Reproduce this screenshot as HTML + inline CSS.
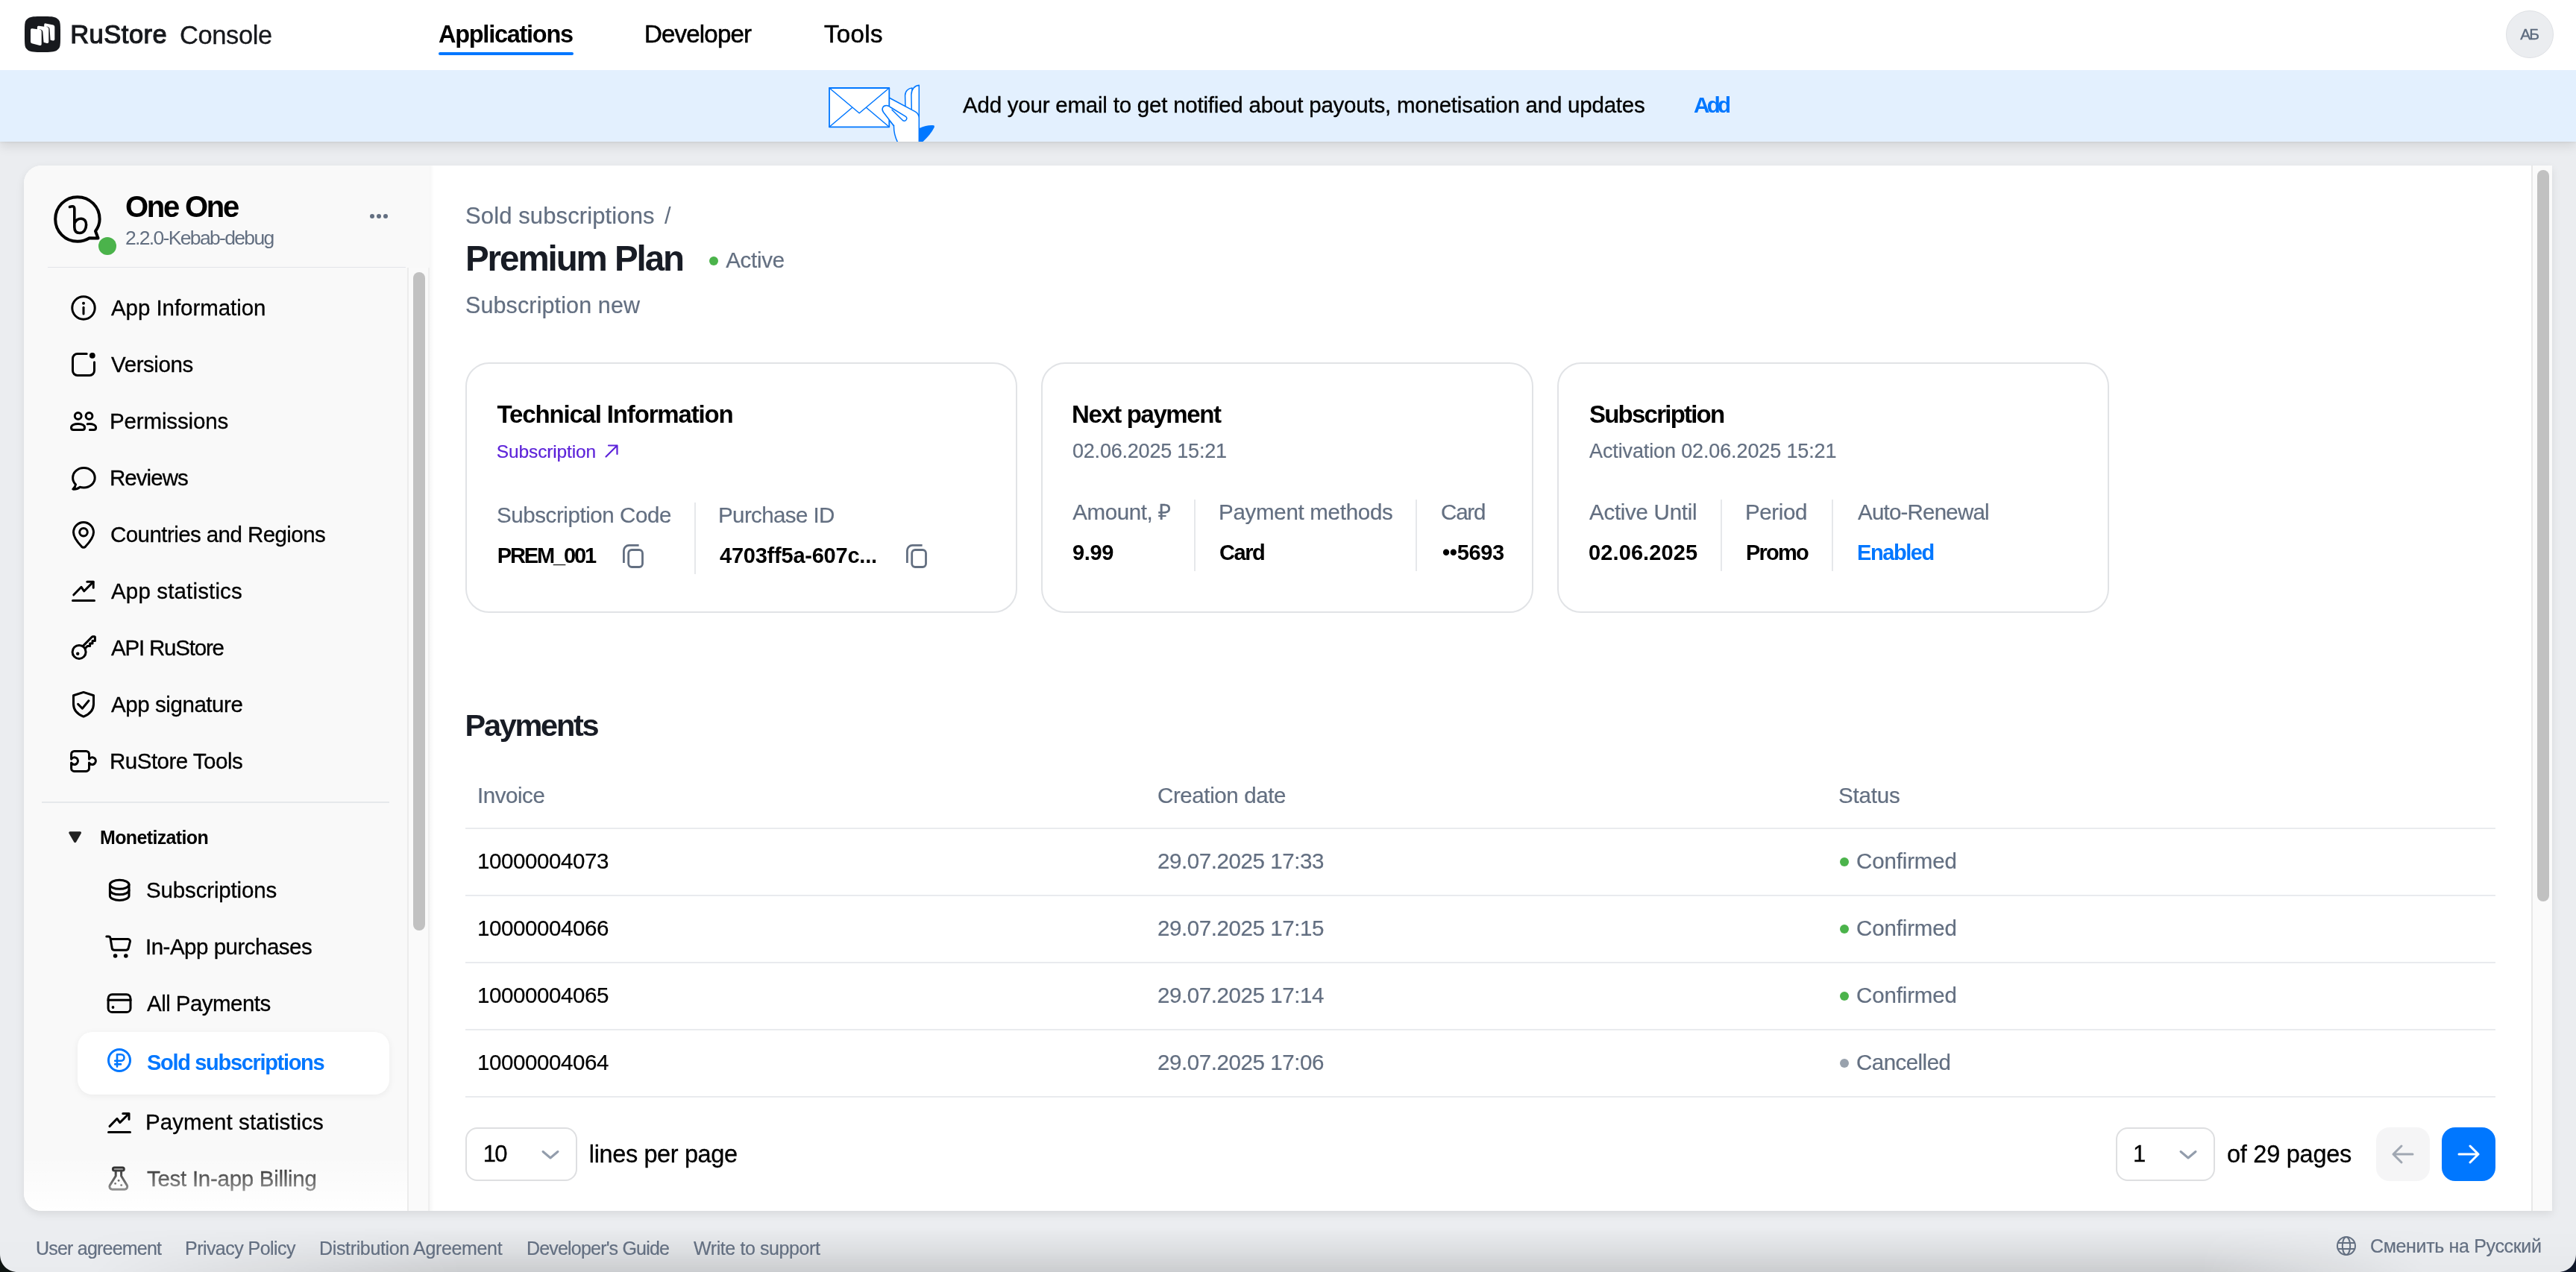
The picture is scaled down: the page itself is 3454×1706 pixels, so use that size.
<!DOCTYPE html>
<html lang="en"><head><meta charset="utf-8"><title>RuStore Console</title><style>
*{box-sizing:border-box;margin:0;padding:0}
html,body{width:3454px;height:1706px;overflow:hidden;background:#EBEDF0;font-family:"Liberation Sans",sans-serif;color:#000}
#app{position:absolute;left:0;top:0;width:3454px;height:1706px;overflow:hidden;will-change:transform;background:#EBEDF0}
.t{position:absolute;white-space:nowrap;line-height:1;display:block}
.i{position:absolute;display:block;overflow:visible}
.abs{position:absolute}
header{position:absolute;left:0;top:0;width:3454px;height:94px;background:#fff;z-index:5}
.banner{position:absolute;left:0;top:94px;width:3454px;height:96px;background:#E3F0FE;z-index:4;box-shadow:0 6px 14px rgba(0,0,0,.10),0 1px 3px rgba(0,0,0,.06);overflow:hidden}
.panel{position:absolute;left:32px;top:222px;width:3390px;height:1402px;border-radius:24px 0 0 24px;background:#fff;box-shadow:0 4px 12px rgba(0,0,0,.085);overflow:hidden}
aside{position:absolute;left:0;top:0;width:544px;height:1402px;background:#F9F9F9}
main{position:absolute;left:544px;top:0;width:2819px;height:1402px;background:#fff}
.card{position:absolute;border:2px solid #E1E3E6;border-radius:32px;background:#fff}
.vl{position:absolute;width:2px;background:#E6E8EB}
.hl{position:absolute;height:2px;background:#E9EBEE}
.dot{position:absolute;border-radius:50%}
footer{position:absolute;left:0;top:1624px;width:3454px;height:82px}
</style></head><body>
<div id="app">

<header>
<svg class="i" style="left:33px;top:22px" width="48" height="48" viewBox="0 0 48 48"><path d="M24 0c10.500 0 15.800 0 19.500 2.700 1.200.900 2.300 2 3.100 3.200C48 9 48 13.500 48 24s0 15-1.400 18.100c-.800 1.200-1.900 2.300-3.100 3.200C39.800 48 34.500 48 24 48S8.200 48 4.500 45.300c-1.200-.900-2.300-2-3.100-3.200C0 39 0 34.500 0 24S0 9 1.400 5.900c.800-1.200 1.900-2.300 3.100-3.200C8.200 0 13.500 0 24 0z" fill="#17191D"/>
<path d="M26.200 11.300q0-2.300 2.200-1.900l10 2.100q1.900.5 1.900 2.500v16.400q0 2.500-2.400 2l-11.700-2.700z" fill="#fff"/>
<path d="M29.6 13.4c2.7.3 3.9 1.6 4 3.6l1 15.2-3 4.500-3-16z" fill="#17191D"/>
<path d="M16.900 14.700q0-2.300 2.200-1.900l11.300 1.500q1.900.4 1.900 2.400v17.300q0 2.500-2.400 2l-13-3.600z" fill="#fff"/>
<path d="M20.2 17.2c2.900.3 4.100 1.600 4.200 3.600l1.200 14.700-3 5-4-18z" fill="#17191D"/>
<path d="M8 18.300q0-2.300 2.200-2l10.600 1.400q1.900.4 1.900 2.400v17q0 2.500-2.400 1.900l-10.400-2.700q-1.900-.5-1.900-2.500z" fill="#fff"/></svg>
<span class="t" style="left:94.20px;top:29.00px;font-size:34.5px;color:#17191D;letter-spacing:0.504px;-webkit-text-stroke:1.2px;">RuStore</span>
<span class="t" style="left:241.00px;top:30.00px;font-size:34.5px;color:#17191D;letter-spacing:-0.399px;-webkit-text-stroke:0.3px;">Console</span>
<span class="t" style="left:588.00px;top:30.00px;font-size:32.5px;font-weight:700;letter-spacing:-1.267px;">Applications</span>
<div class="abs" style="left:588px;top:70px;width:181px;height:4px;border-radius:2px;background:#0077FF"></div>
<span class="t" style="left:864.00px;top:29.00px;font-size:33px;letter-spacing:-0.804px;-webkit-text-stroke:0.55px;">Developer</span>
<span class="t" style="left:1105.00px;top:29.00px;font-size:33px;letter-spacing:0.366px;-webkit-text-stroke:0.55px;">Tools</span>
<div class="abs" style="left:3360px;top:14px;width:64px;height:64px;border-radius:50%;background:#EBEDF0;border:1px solid #DFE1E5"></div>
<span class="t" style="left:3379.30px;top:35.00px;font-size:21px;color:#5D6B7E;letter-spacing:-2.007px;-webkit-text-stroke:0.3px;">АБ</span>
</header>

<div class="banner">
<svg class="i" style="left:1108px;top:0" width="160" height="96" viewBox="1108 94 160 96" fill="none" stroke="#0077FF" stroke-width="1.500" stroke-linejoin="round" stroke-linecap="round">
<path d="M1214 144L1213.600 128C1213.600 122 1218 118.500 1223 118L1223 149Z" fill="#fff"/>
<path d="M1222.300 148L1221.900 127C1222 120 1226 115 1232.300 114.300L1232.300 158Z" fill="#fff"/>
<path d="M1185 127L1193 131.500L1227 149.700C1230.500 151.800 1232.300 154.500 1232.300 158.500L1232.300 192L1204.200 192C1200 184 1198.300 178 1198.500 168.500L1185 152Z" fill="#fff"/>
<rect x="1112" y="118" width="80.300" height="52.300" fill="#fff" stroke-width="1.800"/>
<path d="M1112 118L1152.200 151.700L1192.300 118M1112 170.300L1142.700 144.200M1192.300 170.300L1161.500 144.200"/>
<path d="M1198.500 168.800L1184.500 150.500C1181.500 146.500 1183.500 141.500 1188.500 141.500C1190.500 141.500 1192 142.300 1193.500 143.500L1214.500 156.300C1217.800 158.500 1214.300 163.800 1210.500 161.500L1196 147.200" fill="#fff"/>
<path d="M1232.600 172C1240 168.600 1247 167.300 1252.300 168.300C1253 169 1253 170 1252.600 171C1249 178 1244 184 1237 190.500L1232.600 190.500Z" fill="#0077FF" stroke="none"/>
</svg>
<span class="t" style="left:1291.00px;top:32.00px;font-size:29.5px;letter-spacing:-0.219px;-webkit-text-stroke:0.35px;">Add your email to get notified about payouts, monetisation and updates</span>
<span class="t" style="left:2271.00px;top:32.00px;font-size:29.5px;font-weight:700;color:#0077FF;letter-spacing:-3.662px;">Add</span>
</div>

<div class="panel"><aside><svg class="i" style="left:38px;top:38px" width="70" height="70" viewBox="70 260 70 70" fill="none" stroke="#000" stroke-width="4" stroke-linecap="round" stroke-linejoin="round">
<path d="M131.500 319.500l-3.500-9.500c3.500-4.800 5.600-10.300 5.600-16 0-16.500-13-29.800-29.700-29.800S74.200 277.500 74.200 294s13.200 29.800 29.700 29.800c5.900 0 11.400-1.600 16-4.500z"/>
<path d="M93.500 277.500c4-1.500 6.300-1 6.300 3v24c0 5 2.500 8 7 8 5.500 0 8.800-5 8.800-11 0-5-2.600-8.300-7-8.300-4 0-7 2.500-8.800 6.300" stroke-width="3.600"/></svg>
<div class="dot" style="left:100px;top:96px;width:24px;height:24px;background:#4BB34B"></div>
<span class="t" style="left:136.00px;top:35.00px;font-size:40px;font-weight:700;letter-spacing:-2.242px;">One One</span>
<span class="t" style="left:136.00px;top:84.00px;font-size:26.5px;color:#636F81;letter-spacing:-1.667px;">2.2.0-Kebab-debug</span>
<div class="dot" style="left:464px;top:64.5px;width:6px;height:6px;background:#636F81"></div>
<div class="dot" style="left:473px;top:64.5px;width:6px;height:6px;background:#636F81"></div>
<div class="dot" style="left:482px;top:64.5px;width:6px;height:6px;background:#636F81"></div>
<div class="abs" style="left:32px;top:135.5px;width:480px;height:1.500px;background:#E3E5E9"></div>
<svg class="i" style="left:60px;top:171px;color:#000" width="40" height="40" viewBox="0 0 20 20" fill="none" stroke="currentColor" stroke-width="1.5" stroke-linecap="round" stroke-linejoin="round" ><circle cx="10" cy="10" r="7.600"/><circle cx="10" cy="6.900" r="1" fill="currentColor" stroke="none"/><path d="M10 9.600v4.400"/></svg><span class="t" style="left:117.00px;top:176.00px;font-size:29.5px;letter-spacing:-0.061px;-webkit-text-stroke:0.3px;">App Information</span><svg class="i" style="left:60px;top:246.5px;color:#000" width="40" height="40" viewBox="0 0 20 20" fill="none" stroke="currentColor" stroke-width="1.5" stroke-linecap="round" stroke-linejoin="round" ><path d="M12.100 2.750H5.950a3.200 3.200 0 0 0-3.200 3.200v8.100a3.200 3.200 0 0 0 3.200 3.200h8.100a3.200 3.200 0 0 0 3.200-3.200V8.400"/><circle cx="15.900" cy="3.900" r="1.950" fill="currentColor" stroke="none"/></svg><span class="t" style="left:117.00px;top:252.00px;font-size:29.5px;letter-spacing:-0.414px;-webkit-text-stroke:0.3px;">Versions</span><svg class="i" style="left:60px;top:322.5px;color:#000" width="40" height="40" viewBox="0 0 20 20" fill="none" stroke="currentColor" stroke-width="1.5" stroke-linecap="round" stroke-linejoin="round" ><circle cx="6.350" cy="6.450" r="2.200"/><circle cx="13.750" cy="6.450" r="2.200"/><path d="M1.750 14.300c0-1.600 2-2.500 4.600-2.500s4.400.900 4.400 2.500c0 1-.600 1.500-1.500 1.500H3.250c-.900 0-1.500-.500-1.500-1.500z"/><path d="M12.600 11.900c.400-.100.900-.100 1.300-.100 2.400 0 4.400.900 4.400 2.500 0 1-.600 1.500-1.500 1.500h-2.600"/></svg><span class="t" style="left:115.00px;top:328.00px;font-size:29.5px;letter-spacing:-0.140px;-webkit-text-stroke:0.3px;">Permissions</span><svg class="i" style="left:60px;top:398.5px;color:#000" width="40" height="40" viewBox="0 0 20 20" fill="none" stroke="currentColor" stroke-width="1.5" stroke-linecap="round" stroke-linejoin="round" ><path d="M10.200 3.200C6.100 3.200 2.800 6.150 2.800 9.850c0 1.750.750 3.300 1.950 4.500-.150 1.150-.750 2.200-1.850 3.200 1.900.100 3.500-.400 4.600-1.400.850.250 1.750.350 2.700.350 4.100 0 7.400-2.950 7.400-6.650S14.300 3.200 10.200 3.200z"/></svg><span class="t" style="left:115.00px;top:404.00px;font-size:29.5px;letter-spacing:-0.954px;-webkit-text-stroke:0.3px;">Reviews</span><svg class="i" style="left:60px;top:475px;color:#000" width="40" height="40" viewBox="0 0 20 20" fill="none" stroke="currentColor" stroke-width="1.5" stroke-linecap="round" stroke-linejoin="round" ><path d="M10 18.650c-.500 0-.900-.200-1.300-.600C5.500 14.600 3.250 11.500 3.250 8.500a6.750 6.750 0 0 1 13.500 0c0 3-2.250 6.100-5.450 9.550-.400.400-.800.600-1.300.600z"/><circle cx="10" cy="8.400" r="2.650"/></svg><span class="t" style="left:116.00px;top:480.00px;font-size:29.5px;letter-spacing:-0.567px;-webkit-text-stroke:0.3px;">Countries and Regions</span><svg class="i" style="left:60px;top:550.5px;color:#000" width="40" height="40" viewBox="0 0 20 20" fill="none" stroke="currentColor" stroke-width="1.5" stroke-linecap="round" stroke-linejoin="round" ><path d="M2.750 16.250h14.500"/><path d="M3.400 12.400L8.500 7.150l1.900 2.750 6.100-6.200"/><path d="M12.400 3.600h4.200v4"/></svg><span class="t" style="left:117.00px;top:556.00px;font-size:29.5px;letter-spacing:0.151px;-webkit-text-stroke:0.3px;">App statistics</span><svg class="i" style="left:60px;top:627px;color:#000" width="40" height="40" viewBox="0 0 20 20" fill="none" stroke="currentColor" stroke-width="1.5" stroke-linecap="round" stroke-linejoin="round" ><circle cx="7.050" cy="12.700" r="4.500"/><circle cx="6.100" cy="13.900" r="1.100" fill="currentColor" stroke="none"/><path d="M9.700 8.700l5.700-5.850c.300-.300.650-.450 1.050-.450h.750c.300 0 .500.200.500.500V5.200h-1.700V7h-1.700v1.800h-1.700L11.200 10.300"/></svg><span class="t" style="left:117.00px;top:632.00px;font-size:29.5px;letter-spacing:-1.206px;-webkit-text-stroke:0.3px;">API RuStore</span><svg class="i" style="left:60px;top:702.5px;color:#000" width="40" height="40" viewBox="0 0 20 20" fill="none" stroke="currentColor" stroke-width="1.5" stroke-linecap="round" stroke-linejoin="round" ><path d="M10 1.700l6.750 2.200v5.700c0 4.200-2.900 6.900-6.750 8.450-3.850-1.550-6.750-4.250-6.750-8.450V3.900z"/><path d="M6.300 9.700l2.900 2.900 4.300-5.200"/></svg><span class="t" style="left:117.00px;top:708.00px;font-size:29.5px;letter-spacing:-0.428px;-webkit-text-stroke:0.3px;">App signature</span><svg class="i" style="left:60px;top:778.5px;color:#000" width="40" height="40" viewBox="0 0 20 20" fill="none" stroke="currentColor" stroke-width="1.5" stroke-linecap="round" stroke-linejoin="round" ><path d="M1.800 8.550V5.250a2 2 0 0 1 2-2h7.950a2 2 0 0 1 2 2V8.550A2.400 2.400 0 1 1 13.750 11.050V14.700a2 2 0 0 1-2 2H3.800a2 2 0 0 1-2-2V11.050A2.400 2.400 0 1 0 1.800 8.550z"/></svg><span class="t" style="left:115.00px;top:784.00px;font-size:29.5px;letter-spacing:-0.503px;-webkit-text-stroke:0.3px;">RuStore Tools</span><div class="abs" style="left:24px;top:853px;width:466px;height:2px;background:#E6E8EB"></div><svg class="i" style="left:59.8px;top:893.3px" width="17.300" height="15.400" viewBox="0 0 17.300 15.400"><path d="M1.900 .300h13.500c1.300 0 2 1.300 1.400 2.400L10 14.400c-.650 1.100-2.050 1.100-2.700 0L.500 2.700C-.100 1.600.600 .300 1.900 .300z" fill="#222"/></svg><span class="t" style="left:102.00px;top:889.00px;font-size:25px;font-weight:700;letter-spacing:-0.635px;">Monetization</span><div class="abs" style="left:72px;top:1162px;width:418px;height:84px;border-radius:20px;background:#fff;box-shadow:0 2px 10px rgba(0,0,0,.06)"></div><svg class="i" style="left:112px;top:955px;color:#000" width="32" height="32" viewBox="0 0 16 16" fill="none" stroke="currentColor" stroke-width="1.5" stroke-linecap="round" stroke-linejoin="round" ><ellipse cx="8.100" cy="4.650" rx="6.400" ry="3"/><path d="M1.700 4.650v7.550c0 1.650 2.870 3 6.400 3s6.400-1.350 6.400-3V4.650"/><path d="M1.700 8.400c0 1.650 2.870 3 6.400 3s6.400-1.350 6.400-3"/></svg><span class="t" style="left:164.00px;top:957.00px;font-size:29.5px;letter-spacing:-0.153px;-webkit-text-stroke:0.3px;">Subscriptions</span><svg class="i" style="left:112px;top:1031px;color:#000" width="32" height="32" viewBox="0 0 16 16" fill="none" stroke="currentColor" stroke-width="1.5" stroke-linecap="round" stroke-linejoin="round" ><path d="M-.600 1.500H.700c.700 0 1.200.500 1.300 1.100l1.100 6.700c.150.800.800 1.300 1.600 1.300h7.800c.800 0 1.400-.500 1.600-1.300l1.100-4.300c.200-.900-.500-1.700-1.400-1.700H2.300"/><circle cx="5.300" cy="14.500" r="1.400" fill="currentColor" stroke="none"/><circle cx="12.400" cy="14.500" r="1.400" fill="currentColor" stroke="none"/></svg><span class="t" style="left:163.00px;top:1033.00px;font-size:29.5px;letter-spacing:-0.498px;-webkit-text-stroke:0.3px;">In-App purchases</span><svg class="i" style="left:112px;top:1107px;color:#000" width="32" height="32" viewBox="0 0 16 16" fill="none" stroke="currentColor" stroke-width="1.5" stroke-linecap="round" stroke-linejoin="round" ><rect x=".550" y="2.400" width="14.950" height="11.900" rx="2.700"/><path d="M.550 6.150h14.950"/><circle cx="3.750" cy="11" r=".950" fill="currentColor" stroke="none"/></svg><span class="t" style="left:165.00px;top:1109.00px;font-size:29.5px;letter-spacing:-0.536px;-webkit-text-stroke:0.3px;">All Payments</span><svg class="i" style="left:112px;top:1184px;color:#0077FF" width="32" height="32" viewBox="0 0 16 16" fill="none" stroke="currentColor" stroke-width="1.5" stroke-linecap="round" stroke-linejoin="round" ><circle cx="8" cy="8" r="7.250"/><path d="M6.500 12.300V4.100h2.600a2.150 2.150 0 0 1 0 4.300H5.100M5.100 10.700h3.900" stroke-width="1.300"/></svg><span class="t" style="left:165.00px;top:1189.00px;font-size:29px;font-weight:700;color:#0077FF;letter-spacing:-1.318px;">Sold subscriptions</span><svg class="i" style="left:112px;top:1267px;color:#000" width="32" height="32" viewBox="0 0 16 16" fill="none" stroke="currentColor" stroke-width="1.5" stroke-linecap="round" stroke-linejoin="round" ><path d="M.750 14.750h14.500"/><path d="M1.500 10.800L6.500 5.650l1.900 2.650 5.900-5.900"/><path d="M10.400 2.250h4.100v3.850"/></svg><span class="t" style="left:163.00px;top:1268.00px;font-size:29.5px;letter-spacing:0.061px;-webkit-text-stroke:0.3px;">Payment statistics</span><svg class="i" style="left:112px;top:1343px;color:#000" width="32" height="32" viewBox="0 0 16 16" fill="none" stroke="currentColor" stroke-width="1.5" stroke-linecap="round" stroke-linejoin="round" ><rect x="3.700" y=".500" width="7.450" height="2.050" rx="1"/><path d="M5.600 2.600v3.500L1.700 12.300c-.800 1.250.100 2.800 1.500 2.800h8.400c1.400 0 2.300-1.550 1.500-2.800L9.300 6.100V2.600"/><circle cx="7.550" cy="9.200" r=".700" fill="currentColor" stroke="none"/><circle cx="5.300" cy="11.200" r=".700" fill="currentColor" stroke="none"/><circle cx="9.350" cy="12.300" r=".700" fill="currentColor" stroke="none"/></svg><span class="t" style="left:165.00px;top:1344.00px;font-size:29.5px;letter-spacing:-0.274px;-webkit-text-stroke:0.3px;">Test In-app Billing</span><div class="abs" style="left:0;top:1328px;width:515px;height:74px;background:linear-gradient(to bottom,rgba(252,252,252,0),rgba(255,255,255,.55) 60%,#fff)"></div><div class="abs" style="left:514px;top:137px;width:30px;height:1265px;background:#FAFAFA;border-left:2px solid #ECECEC;border-right:2px solid #EFEFEF"></div><div class="abs" style="left:522px;top:143px;width:16px;height:883px;border-radius:8px;background:#C1C1C1"></div></aside><main><div class="abs" style="left:0;top:0;width:6px;height:1402px;background:linear-gradient(to right,rgba(0,0,0,.035),rgba(0,0,0,0))"></div><span class="t" style="left:48.00px;top:52.00px;font-size:31px;color:#636F81;letter-spacing:0.113px;-webkit-text-stroke:0.2px;">Sold subscriptions</span><span class="t" style="left:315.00px;top:52.00px;font-size:31px;color:#636F81;">/</span><span class="t" style="left:48.00px;top:101.00px;font-size:47.5px;font-weight:700;color:#181C25;letter-spacing:-2.069px;">Premium Plan</span><div class="dot" style="left:375px;top:122px;width:12px;height:12px;background:#4BB34B"></div><span class="t" style="left:397.20px;top:112.00px;font-size:29.5px;color:#636F81;letter-spacing:-0.265px;-webkit-text-stroke:0.2px;">Active</span><span class="t" style="left:48.00px;top:172.00px;font-size:30.5px;color:#636F81;letter-spacing:0.117px;-webkit-text-stroke:0.2px;">Subscription new</span><div class="card" style="left:48px;top:264px;width:740px;height:336px"></div><div class="card" style="left:820px;top:264px;width:660px;height:336px"></div><div class="card" style="left:1512px;top:264px;width:740px;height:336px"></div><span class="t" style="left:90.50px;top:317.00px;font-size:33px;font-weight:700;letter-spacing:-1.163px;">Technical Information</span><span class="t" style="left:89.80px;top:372.00px;font-size:24.5px;color:#5C22D9;letter-spacing:-0.127px;-webkit-text-stroke:0.2px;">Subscription</span><svg class="i" style="left:233px;top:372px" width="22" height="22" viewBox="0 0 22 22" fill="none" stroke="#5C22D9" stroke-width="2.200" stroke-linecap="round" stroke-linejoin="round"><path d="M3.500 18.500L18.500 3.500M7 3.500h11.500V15"/></svg><span class="t" style="left:90.00px;top:454.00px;font-size:29.5px;color:#636F81;letter-spacing:-0.416px;-webkit-text-stroke:0.2px;">Subscription Code</span><span class="t" style="left:387.00px;top:454.00px;font-size:29.5px;color:#636F81;letter-spacing:-0.602px;-webkit-text-stroke:0.2px;">Purchase ID</span><div class="vl" style="left:355px;top:452px;height:96px"></div><span class="t" style="left:90.80px;top:509.00px;font-size:29px;font-weight:700;letter-spacing:-2.139px;">PREM_001</span><span class="t" style="left:389.00px;top:509.00px;font-size:29px;font-weight:700;letter-spacing:-0.225px;">4703ff5a-607c...</span><svg class="i" style="left:254px;top:504px;color:#636F81" width="40" height="40" viewBox="0 0 20 20" fill="none" stroke="currentColor" stroke-width="1.4" stroke-linecap="round" stroke-linejoin="round" ><path d="M3.200 14.500V6.200a3.500 3.500 0 0 1 3.500-3.500h6.600" stroke-linecap="butt"/><rect x="6.350" y="5.750" width="9.400" height="11.500" rx="2.200"/></svg><svg class="i" style="left:634px;top:504px;color:#636F81" width="40" height="40" viewBox="0 0 20 20" fill="none" stroke="currentColor" stroke-width="1.4" stroke-linecap="round" stroke-linejoin="round" ><path d="M3.200 14.500V6.200a3.500 3.500 0 0 1 3.500-3.500h6.600" stroke-linecap="butt"/><rect x="6.350" y="5.750" width="9.400" height="11.500" rx="2.200"/></svg><span class="t" style="left:861.00px;top:317.00px;font-size:33px;font-weight:700;letter-spacing:-1.401px;">Next payment</span><span class="t" style="left:862.00px;top:370.00px;font-size:27px;color:#636F81;letter-spacing:-0.212px;-webkit-text-stroke:0.2px;">02.06.2025 15:21</span><span class="t" style="left:862.20px;top:450.00px;font-size:29.5px;color:#636F81;letter-spacing:-0.382px;-webkit-text-stroke:0.2px;">Amount, ₽</span><span class="t" style="left:1058.00px;top:450.00px;font-size:29.5px;color:#636F81;letter-spacing:-0.286px;-webkit-text-stroke:0.2px;">Payment methods</span><span class="t" style="left:1356.00px;top:450.00px;font-size:29.5px;color:#636F81;letter-spacing:-1.178px;-webkit-text-stroke:0.2px;">Card</span><div class="vl" style="left:1025px;top:448px;height:96px"></div><div class="vl" style="left:1322px;top:448px;height:96px"></div><span class="t" style="left:862.00px;top:505.00px;font-size:29px;font-weight:700;letter-spacing:-0.371px;">9.99</span><span class="t" style="left:1059.00px;top:505.00px;font-size:29px;font-weight:700;letter-spacing:-1.452px;">Card</span><span class="t" style="left:1358.00px;top:505.00px;font-size:29px;font-weight:700;letter-spacing:-0.338px;">••5693</span><span class="t" style="left:1555.00px;top:317.00px;font-size:33px;font-weight:700;letter-spacing:-1.774px;">Subscription</span><span class="t" style="left:1555.00px;top:370.00px;font-size:27px;color:#636F81;letter-spacing:-0.125px;-webkit-text-stroke:0.2px;">Activation 02.06.2025 15:21</span><span class="t" style="left:1555.00px;top:450.00px;font-size:29.5px;color:#636F81;letter-spacing:-0.272px;-webkit-text-stroke:0.2px;">Active Until</span><span class="t" style="left:1764.00px;top:450.00px;font-size:29.5px;color:#636F81;letter-spacing:-0.373px;-webkit-text-stroke:0.2px;">Period</span><span class="t" style="left:1915.00px;top:450.00px;font-size:29.5px;color:#636F81;letter-spacing:-0.795px;-webkit-text-stroke:0.2px;">Auto-Renewal</span><div class="vl" style="left:1731px;top:448px;height:96px"></div><div class="vl" style="left:1880px;top:448px;height:96px"></div><span class="t" style="left:1554.00px;top:505.00px;font-size:29px;font-weight:700;letter-spacing:0.110px;">02.06.2025</span><span class="t" style="left:1765.00px;top:505.00px;font-size:29px;font-weight:700;letter-spacing:-1.782px;">Promo</span><span class="t" style="left:1914.00px;top:505.00px;font-size:29px;font-weight:700;color:#0077FF;letter-spacing:-1.431px;">Enabled</span><span class="t" style="left:47.50px;top:730.00px;font-size:41.5px;font-weight:700;color:#181C25;letter-spacing:-2.284px;">Payments</span><span class="t" style="left:63.90px;top:830.00px;font-size:29.5px;color:#636F81;letter-spacing:-0.427px;-webkit-text-stroke:0.2px;">Invoice</span><span class="t" style="left:976.00px;top:830.00px;font-size:29.5px;color:#636F81;letter-spacing:-0.392px;-webkit-text-stroke:0.2px;">Creation date</span><span class="t" style="left:1889.00px;top:830.00px;font-size:29.5px;color:#636F81;letter-spacing:-0.176px;-webkit-text-stroke:0.2px;">Status</span><div class="hl" style="left:48px;top:888px;width:2722px"></div><div class="hl" style="left:48px;top:978px;width:2722px"></div><div class="hl" style="left:48px;top:1068px;width:2722px"></div><div class="hl" style="left:48px;top:1158px;width:2722px"></div><div class="hl" style="left:48px;top:1248px;width:2722px"></div><span class="t" style="left:63.90px;top:918.00px;font-size:29.5px;letter-spacing:-0.396px;-webkit-text-stroke:0.2px;">10000004073</span><span class="t" style="left:976.00px;top:918.00px;font-size:29.5px;color:#636F81;letter-spacing:-0.417px;-webkit-text-stroke:0.2px;">29.07.2025 17:33</span><span class="t" style="left:1913.00px;top:918.00px;font-size:29.5px;color:#636F81;letter-spacing:-0.146px;-webkit-text-stroke:0.2px;">Confirmed</span><div class="dot" style="left:1891px;top:928px;width:12px;height:12px;background:#4BB34B"></div><span class="t" style="left:63.90px;top:1008.00px;font-size:29.5px;letter-spacing:-0.396px;-webkit-text-stroke:0.2px;">10000004066</span><span class="t" style="left:976.00px;top:1008.00px;font-size:29.5px;color:#636F81;letter-spacing:-0.417px;-webkit-text-stroke:0.2px;">29.07.2025 17:15</span><span class="t" style="left:1913.00px;top:1008.00px;font-size:29.5px;color:#636F81;letter-spacing:-0.146px;-webkit-text-stroke:0.2px;">Confirmed</span><div class="dot" style="left:1891px;top:1018px;width:12px;height:12px;background:#4BB34B"></div><span class="t" style="left:63.90px;top:1098.00px;font-size:29.5px;letter-spacing:-0.396px;-webkit-text-stroke:0.2px;">10000004065</span><span class="t" style="left:976.00px;top:1098.00px;font-size:29.5px;color:#636F81;letter-spacing:-0.417px;-webkit-text-stroke:0.2px;">29.07.2025 17:14</span><span class="t" style="left:1913.00px;top:1098.00px;font-size:29.5px;color:#636F81;letter-spacing:-0.146px;-webkit-text-stroke:0.2px;">Confirmed</span><div class="dot" style="left:1891px;top:1108px;width:12px;height:12px;background:#4BB34B"></div><span class="t" style="left:63.90px;top:1188.00px;font-size:29.5px;letter-spacing:-0.396px;-webkit-text-stroke:0.2px;">10000004064</span><span class="t" style="left:976.00px;top:1188.00px;font-size:29.5px;color:#636F81;letter-spacing:-0.417px;-webkit-text-stroke:0.2px;">29.07.2025 17:06</span><span class="t" style="left:1913.00px;top:1188.00px;font-size:29.5px;color:#636F81;letter-spacing:-0.536px;-webkit-text-stroke:0.2px;">Cancelled</span><div class="dot" style="left:1891px;top:1198px;width:12px;height:12px;background:#99A2AD"></div><div class="abs" style="left:48.299999999999955px;top:1290px;width:149.400px;height:72px;border:2px solid #DEDFE1;border-radius:16px"></div><span class="t" style="left:71.70px;top:1310.00px;font-size:31px;letter-spacing:-1.641px;-webkit-text-stroke:0.3px;">10</span><span class="t" style="left:213.80px;top:1310.00px;font-size:32.5px;letter-spacing:-0.377px;-webkit-text-stroke:0.3px;">lines per page</span><svg class="i" style="left:150px;top:1320px;color:#939DAC" width="24" height="14" viewBox="0 0 24 14" fill="none" stroke="currentColor" stroke-width="3" stroke-linecap="round" stroke-linejoin="round" ><path d="M2 2.500l10 8.500 10-8.500"/></svg><div class="abs" style="left:2261.3px;top:1290px;width:132.400px;height:72px;border:2px solid #DEDFE1;border-radius:16px"></div><span class="t" style="left:2284.00px;top:1310.00px;font-size:31px;-webkit-text-stroke:0.3px;">1</span><span class="t" style="left:2410.00px;top:1310.00px;font-size:32.5px;letter-spacing:-0.261px;-webkit-text-stroke:0.3px;">of 29 pages</span><svg class="i" style="left:2346px;top:1320px;color:#939DAC" width="24" height="14" viewBox="0 0 24 14" fill="none" stroke="currentColor" stroke-width="3" stroke-linecap="round" stroke-linejoin="round" ><path d="M2 2.500l10 8.500 10-8.500"/></svg><div class="abs" style="left:2610px;top:1290px;width:72px;height:72px;border-radius:18px;background:#F5F5F6"></div><svg class="i" style="left:2630px;top:1312px;color:#A0A7B2" width="32" height="28" viewBox="0 0 32 28" fill="none" stroke="currentColor" stroke-width="3" stroke-linecap="round" stroke-linejoin="round" ><path d="M29 14H3M14 3L3 14l11 11"/></svg><div class="abs" style="left:2698px;top:1290px;width:72px;height:72px;border-radius:18px;background:#0077FF"></div><svg class="i" style="left:2718px;top:1312px;color:#fff" width="32" height="28" viewBox="0 0 32 28" fill="none" stroke="currentColor" stroke-width="3" stroke-linecap="round" stroke-linejoin="round" ><path d="M3 14h26M18 3l11 11-11 11"/></svg></main><div class="abs" style="left:3362px;top:0;width:28px;height:1402px;background:#FAFAFA;border-left:2px solid #E8E8E8"></div><div class="abs" style="left:3370px;top:6px;width:16px;height:981px;border-radius:8px;background:#C1C1C1"></div></div>
<footer>
<div class="abs" style="left:0;top:22px;width:3454px;height:60px;background:linear-gradient(to bottom,rgba(0,0,0,0),rgba(0,0,0,.05) 45%,rgba(0,0,0,.135));-webkit-mask-image:linear-gradient(to right,rgba(0,0,0,.05) 120px,#000 620px,#000 2950px,rgba(0,0,0,.12) 3250px);mask-image:linear-gradient(to right,rgba(0,0,0,.05) 120px,#000 620px,#000 2950px,rgba(0,0,0,.12) 3250px)"></div>
<span class="t" style="left:48.00px;top:38.00px;font-size:25px;color:#636F81;letter-spacing:-0.792px;-webkit-text-stroke:0.2px;">User agreement</span><span class="t" style="left:248.00px;top:38.00px;font-size:25px;color:#636F81;letter-spacing:-0.545px;-webkit-text-stroke:0.2px;">Privacy Policy</span><span class="t" style="left:428.00px;top:38.00px;font-size:25px;color:#636F81;letter-spacing:-0.349px;-webkit-text-stroke:0.2px;">Distribution Agreement</span>
<span class="t" style="left:706.00px;top:38.00px;font-size:25px;color:#636F81;letter-spacing:-0.811px;-webkit-text-stroke:0.2px;">Developer&#x27;s Guide</span><span class="t" style="left:930.00px;top:38.00px;font-size:25px;color:#636F81;letter-spacing:-0.404px;-webkit-text-stroke:0.2px;">Write to support</span>
<svg class="i" style="left:3132px;top:33px" width="28" height="28" viewBox="0 0 28 28" fill="none" stroke="#636F81" stroke-width="2"><circle cx="14" cy="14" r="12"/><ellipse cx="14" cy="14" rx="5.200" ry="12"/><path d="M2.500 10h23M2.500 18h23"/></svg>
<span class="t" style="left:3178.00px;top:35.00px;font-size:25px;color:#636F81;letter-spacing:-0.341px;-webkit-text-stroke:0.2px;">Сменить на Русский</span>
</footer>
<svg class="i" style="left:0;top:1682px" width="24" height="24" viewBox="0 0 24 24"><path d="M0 0v24h24C10 24 0 14 0 0z" fill="#0E1412"/></svg>
<svg class="i" style="left:3430px;top:1682px" width="24" height="24" viewBox="0 0 24 24"><path d="M24 0v24H0c14 0 24-10 24-24z" fill="#10182A"/></svg>

</div>
<script>(function(){var w=window.innerWidth;if(w&&w<3450){var a=document.getElementById('app');a.style.transformOrigin='0 0';a.style.transform='scale('+(w/3454)+')';}})();</script>
</body></html>
